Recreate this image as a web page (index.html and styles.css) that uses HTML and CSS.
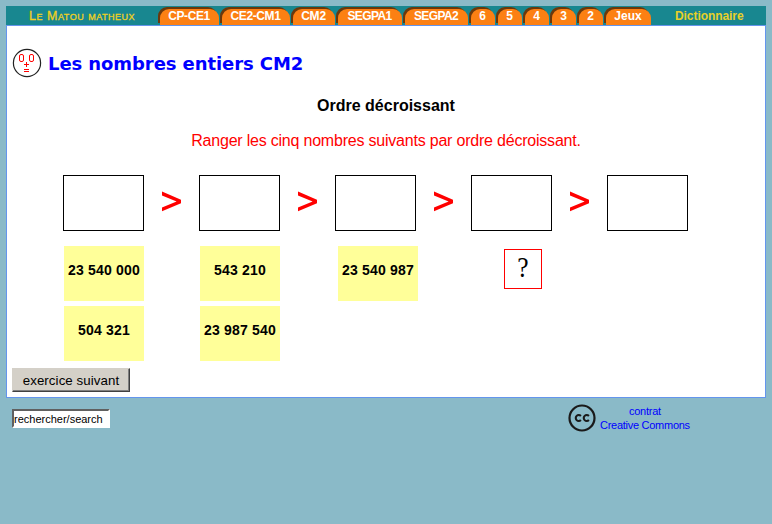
FILE: index.html
```html
<!DOCTYPE html>
<html lang="fr">
<head>
<meta charset="utf-8">
<title>Les nombres entiers CM2</title>
<link rel="stylesheet" href="styles.css">
</head>
<body>
<nav class="nav">
  <a class="brand">Le Matou matheux</a>
  <div class="tabs">
    <a class="tab cp">CP-CE1</a><a class="tab ce">CE2-CM1</a><a class="tab cm">CM2</a><a class="tab s1">SEGPA1</a><a class="tab s2">SEGPA2</a><a class="tab">6</a><a class="tab">5</a><a class="tab">4</a><a class="tab">3</a><a class="tab">2</a><a class="tab games">Jeux</a>
  </div>
  <a class="dictionary">Dictionnaire</a>
</nav>
<main class="panel">
  <header class="heading">
    <svg class="face" width="30" height="30" viewBox="0 0 30 30">
      <circle cx="15" cy="15" r="13.6" fill="#fff" stroke="#222" stroke-width="1.2"/>
      <g fill="none" stroke="#f00">
        <rect x="7.5" y="6.5" width="4" height="7" rx="1.5"/>
        <rect x="17.5" y="6.5" width="4" height="7" rx="1.5"/>
        <path d="M12 16.5h5M14.5 14v5M12 21.5h5M12 23.5h5"/>
      </g>
    </svg>
    <h1>Les nombres entiers CM2</h1>
  </header>
  <h2>Ordre décroissant</h2>
  <p class="instruction">Ranger les cinq nombres suivants par ordre décroissant.</p>
  <div class="slots">
    <div class="slot"></div><svg class="gt" viewBox="0 0 55 56"><path d="M18 16.6L37 24.8V28.2L18 36.2V32.4L32.6 26.5L18 20.4Z"/></svg>
    <div class="slot"></div><svg class="gt" viewBox="0 0 55 56"><path d="M18 16.6L37 24.8V28.2L18 36.2V32.4L32.6 26.5L18 20.4Z"/></svg>
    <div class="slot"></div><svg class="gt" viewBox="0 0 55 56"><path d="M18 16.6L37 24.8V28.2L18 36.2V32.4L32.6 26.5L18 20.4Z"/></svg>
    <div class="slot"></div><svg class="gt" viewBox="0 0 55 56"><path d="M18 16.6L37 24.8V28.2L18 36.2V32.4L32.6 26.5L18 20.4Z"/></svg>
    <div class="slot"></div>
  </div>
  <div class="cards">
    <div class="card">23 540 000</div><div class="card">543 210</div><div class="card third">23 540 987</div><div class="help"><span>?</span></div>
    <div class="card">504 321</div><div class="card">23 987 540</div>
  </div>
  <button class="next">exercice suivant</button>
</main>
<footer class="footer">
  <div class="search">rechercher/search</div>
  <div class="license">
    <svg width="28" height="28" viewBox="0 0 28 28">
      <circle cx="14" cy="14" r="12.5" fill="none" stroke="#1a1a1a" stroke-width="2.2"/>
      <g fill="none" stroke="#1a1a1a" stroke-width="2.1"><path d="M12.9 11.9A3 3 0 1 0 12.9 16.1"/><path d="M20.9 11.9A3 3 0 1 0 20.9 16.1"/></g>
    </svg>
    <a>contrat<br>Creative Commons</a>
  </div>
</footer>
</body>
</html>
```
FILE: styles.css
```css
* { box-sizing: border-box; }
body {
  margin: 0;
  padding: 6px;
  background: #8abac8;
  font-family: "Liberation Sans", Arial, sans-serif;
}
.nav {
  display: flex;
  width: 760px;
  height: 19px;
  background: #188790;
  font-size: 12px;
  font-weight: bold;
  line-height: 19px;
  white-space: nowrap;
}
.brand {
  width: 151px;
  padding-left: 23px;
  color: #f0d020;
  font-variant: small-caps;
  font-weight: normal;
  font-size: 12.5px;
  line-height: 20px;
  letter-spacing: 0.52px;
  -webkit-text-stroke: 0.3px #f0d020;
}
.tabs {
  display: flex;
  gap: 3px;
  padding: 3px 0 0 3px;
}
.tab {
  width: 24px;
  height: 16px;
  border-radius: 9px 9px 0 0;
  background: #fc8013;
  box-shadow: -2px -2px 0 #6b380c;
  color: #fff;
  line-height: 14px;
  display: flex;
  justify-content: center;
  padding-right: 1px;
}
.cp { width: 59px; letter-spacing: -0.45px; }
.ce { width: 68px; letter-spacing: -0.4px; }
.cm { width: 42px; letter-spacing: -0.2px; }
.s1 { width: 64px; letter-spacing: -0.6px; }
.s2 { width: 63px; letter-spacing: -0.6px; }
.games { width: 45px; }
.dictionary {
  padding-left: 24px;
  color: #e8d028;
  line-height: 20px;
  letter-spacing: -0.07px;
}
.panel {
  width: 760px;
  height: 373px;
  border: 1px solid #6495ed;
  background: #fff;
}
.heading {
  display: flex;
  align-items: center;
  height: 30px;
  margin: 22px 0 0 5px;
}
.heading h1 {
  margin: 0 0 0 6px;
  color: #00f;
  font: bold 18px "DejaVu Sans", sans-serif;
  letter-spacing: -0.08px;
}
h2 {
  margin: 18px 0 0;
  font-size: 16px;
  line-height: 20px;
  text-align: center;
}
.instruction {
  margin: 15px 0 0;
  color: #f00;
  font-size: 16px;
  line-height: 20px;
  letter-spacing: -0.21px;
  text-align: center;
}
.slots {
  display: flex;
  margin: 24px 0 0 56px;
}
.slot {
  width: 81px;
  height: 56px;
  border: 1px solid #000;
}
.gt {
  width: 55px;
  height: 56px;
  fill: #f00;
}
.cards {
  display: grid;
  grid-template-columns: repeat(4, 136px);
  grid-template-rows: 55px 55px;
  row-gap: 5px;
  margin: 15px 0 0 57px;
}
.card {
  width: 80px;
  height: 55px;
  background: #ff9;
  font-size: 14px;
  font-weight: bold;
  line-height: 48px;
  text-align: center;
  letter-spacing: 0.2px;
}
.third { margin-left: 2px; }
.help {
  width: 38px;
  height: 40px;
  margin: 3px 0 0 32px;
  border: 1px solid #f00;
  font: 29px/36px "Liberation Serif", serif;
  text-align: center;
}
.help span {
  display: block;
  margin-top: -1px;
  transform: scaleX(0.88);
}
.next {
  display: block;
  width: 118px;
  height: 24px;
  margin: 7px 0 0 5px;
  padding: 1px 0 0;
  border: solid;
  border-width: 1px 1px 1px 1px;
  border-color: #d4d0c8 #404040 #404040 #d4d0c8;
  box-shadow: inset -1px -1px 0 #808080;
  background: #d4d0c8;
  color: #000;
  font: 13.3px "Liberation Sans", sans-serif;
  letter-spacing: 0.08px;
}
.footer {
  display: flex;
  padding: 6px 0 0 6px;
}
.search {
  width: 98px;
  height: 19px;
  margin-top: 5px;
  border: 2px solid;
  border-color: #606060 #fff #fff #606060;
  background: #fff;
  font-size: 11px;
  line-height: 17px;
  white-space: nowrap;
}
.license {
  display: flex;
  gap: 4px;
  margin-left: 458px;
}
.license a {
  margin-top: 0;
  color: #00f;
  font-size: 11px;
  line-height: 14px;
  letter-spacing: -0.27px;
  text-align: center;
}
```
